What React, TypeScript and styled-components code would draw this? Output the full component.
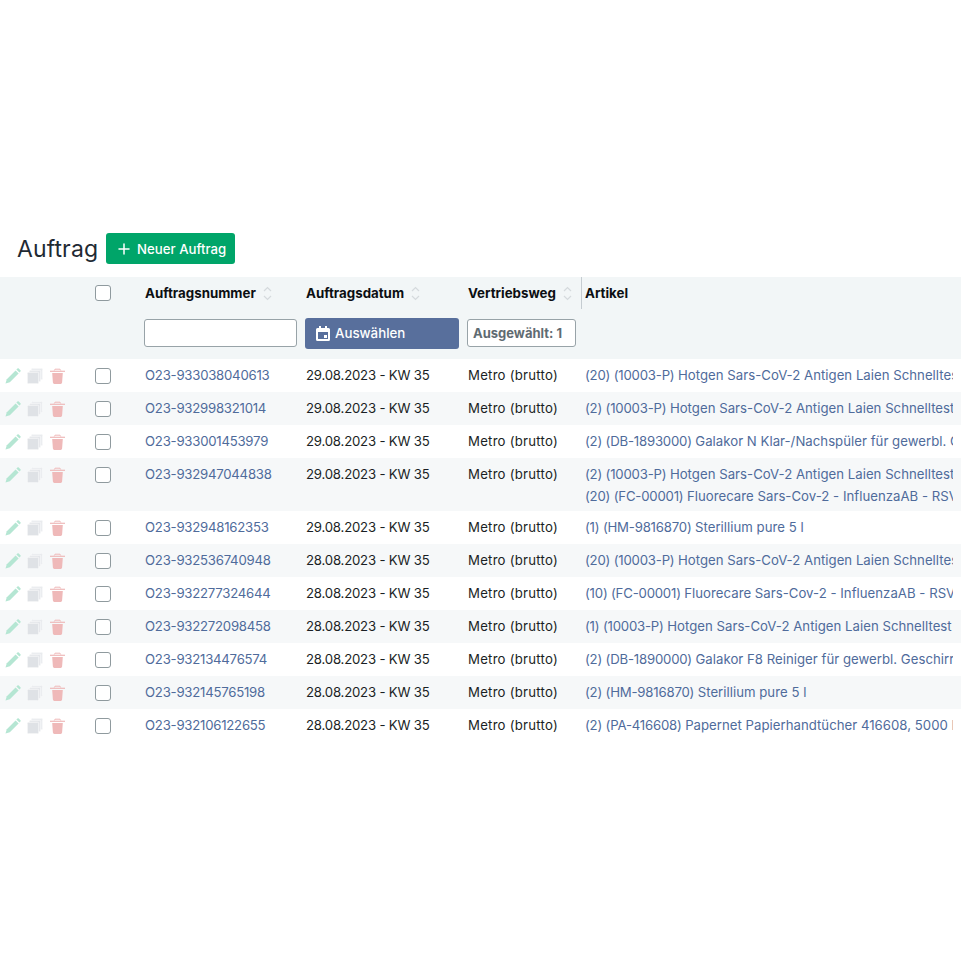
import React from "react";
import styled, { createGlobalStyle } from "styled-components";

const GlobalStyle = createGlobalStyle`
  html, body {
    margin: 0;
    padding: 0;
    background: #ffffff;
    font-family: "Inter", "Liberation Sans", sans-serif;
    overflow: hidden;
  }
`;

const Page = styled.div`
  width: 961px;
  height: 961px;
  padding-top: 233px;
  box-sizing: border-box;
  overflow: hidden;
`;

const TitleRow = styled.div`
  display: flex;
  align-items: center;
  gap: 8px;
  height: 31px;
  padding-left: 17px;
  margin-bottom: 13px;
`;

const Title = styled.h1`
  margin: 0;
  font-size: 23px;
  font-weight: 400;
  letter-spacing: 0.1px;
  color: #1f2a33;
`;

const NewButton = styled.button`
  display: flex;
  align-items: center;
  gap: 7px;
  width: 129px;
  height: 31px;
  padding: 0 0 0 12px;
  border: none;
  border-radius: 3px;
  background: #00a569;
  color: #ffffff;
  font: 500 13.2px "Inter", sans-serif;
`;

const Table = styled.table`
  width: 961px;
  table-layout: fixed;
  border-collapse: collapse;
`;

const HeadRow = styled.tr`
  height: 32px;
  background: #f2f6f7;
`;

const HeadCell = styled.th<{ $divider?: boolean }>`
  padding: 0 0 0 4px;
  text-align: left;
  vertical-align: middle;
  font-size: 13.3px;
  font-weight: 700;
  color: #0c0f12;
  white-space: nowrap;
  box-shadow: ${(p) => (p.$divider ? "inset 1px 0 0 #c5ccd1" : "none")};
`;

const FilterRow = styled.tr`
  height: 50px;
  background: #f2f6f7;
`;

const FilterCell = styled.td`
  padding: 0 0 2px 3px;
  vertical-align: middle;
`;

const HeadInner = styled.span`
  display: inline-flex;
  align-items: center;
  gap: 7px;
`;

const TextFilter = styled.input`
  display: block;
  width: 153px;
  height: 28px;
  box-sizing: border-box;
  border: 1px solid #98a3a8;
  border-radius: 3px;
  background: #ffffff;
  outline: none;
`;

const DateButton = styled.button`
  display: flex;
  align-items: center;
  gap: 5px;
  width: 154px;
  height: 31px;
  padding: 0 0 0 11px;
  border: none;
  border-radius: 3px;
  background: #586f9c;
  color: #ffffff;
  font: 500 13.3px "Inter", sans-serif;
`;

const SelectButton = styled.button`
  display: block;
  width: 109px;
  height: 28px;
  padding: 0 0 0 5px;
  text-align: left;
  border: 1px solid #98a3a8;
  border-radius: 3px;
  background: #ffffff;
  color: #5f6b72;
  font: 700 13px "Inter", sans-serif;
`;

const Row = styled.tr<{ $striped: boolean }>`
  height: 33px;
  background: ${(p) => (p.$striped ? "#f6f8f9" : "#ffffff")};
`;

const Cell = styled.td`
  padding: 5px 0 4px 4px;
  font-size: 13.2px;
  line-height: 22px;
  color: #1a1f24;
  vertical-align: top;
  white-space: nowrap;
  overflow: hidden;
`;

const ActionCell = styled(Cell)`
  padding: 6px 0 0 5px;
`;

const Actions = styled.div`
  display: flex;
  gap: 6px;
  height: 22px;
  align-items: center;
`;

const CheckCell = styled(Cell)`
  padding: 9px 0 0 8px;
`;

const HeadCheckCell = styled(HeadCell)`
  padding-left: 8px;
`;

const Check = styled.span`
  display: block;
  width: 14px;
  height: 14px;
  border: 1px solid #8f9a9e;
  border-radius: 3px;
  background: #ffffff;
`;

const IdCell = styled(Cell)`
  letter-spacing: -0.24px;
`;

const DateCell = styled(Cell)`
  letter-spacing: -0.2px;
`;

const ChannelCell = styled(Cell)`
  letter-spacing: 0.24px;
`;

const ArticleClip = styled.div`
  width: 368px;
  overflow: hidden;
  color: #4f6b9b;
  letter-spacing: 0.02px;
`;

const ArticleCode = styled.span`
  letter-spacing: -0.2px;
`;

const OrderLink = styled.a`
  color: #4f6b9b;
  text-decoration: none;
`;

const SortIcon = () => (
  <svg width="9" height="15" viewBox="0 0 9 15" fill="none" stroke="#d5dadd" strokeWidth="1.2">
    <path d="M1 5l3.5-3.5L8 5" />
    <path d="M1 10l3.5 3.5L8 10" />
  </svg>
);

const PlusIcon = () => (
  <svg width="12" height="12" viewBox="0 0 12 12" stroke="#fff" strokeWidth="1.5" strokeLinecap="round">
    <path d="M6 1v10M1 6h10" />
  </svg>
);

const CalendarIcon = () => (
  <svg width="14" height="15" viewBox="0 0 14 15" fill="#fff">
    <path
      fillRule="evenodd"
      d="M3 0h2v2h4V0h2v2h1.5A1.5 1.5 0 0 1 14 3.5v10a1.5 1.5 0 0 1-1.5 1.5h-11A1.5 1.5 0 0 1 0 13.5v-10A1.5 1.5 0 0 1 1.5 2H3zM2 6v7h10V6zM8 9h3v3H8z"
    />
  </svg>
);

const PenIcon = () => (
  <svg width="16" height="16" viewBox="0 0 16 16" fill="#b5e6d3">
    <path d="M10.6 2.4l3 3-8.8 8.8L.5 15.5l1.3-4.3z" />
    <path d="M11.4 1.6l1-1a1 1 0 0 1 1.4 0l1.6 1.6a1 1 0 0 1 0 1.4l-1 1z" />
  </svg>
);

const CopyIcon = () => (
  <svg width="16" height="16" viewBox="0 0 16 16">
    <rect x="4.3" y="0.3" width="11.4" height="11.4" rx="1" fill="#e9ebee" stroke="#fff" strokeWidth="0.6" />
    <rect x="2.3" y="2.3" width="11.4" height="11.4" rx="1" fill="#e4e6ea" stroke="#fff" strokeWidth="0.6" />
    <rect x="0.3" y="4.3" width="11.4" height="11.4" rx="1" fill="#dfe2e6" stroke="#fff" strokeWidth="0.6" />
  </svg>
);

const TrashIcon = () => (
  <svg width="16" height="16" viewBox="-1 0 16 16" fill="#efb9b9">
    <path d="M4.3 2.5L5 1.2h5l.7 1.3" fill="none" stroke="#efb9b9" strokeWidth="1" />
    <path d="M0 2.7h15v1.2H0z" />
    <path d="M2.2 5h10.6l-.7 9.5a1.5 1.5 0 0 1-1.5 1.4H4.4a1.5 1.5 0 0 1-1.5-1.4z" />
  </svg>
);

type Article = { code: string; name: string };
type Order = { id: string; date: string; articles: Article[] };

const hotgen = "Hotgen Sars-CoV-2 Antigen Laien Schnelltest";
const sterillium = "Sterillium pure 5 l";

const orders: Order[] = [
  { id: "O23-933038040613", date: "29.08.2023 - KW 35", articles: [{ code: "(20) (10003-P)", name: hotgen }] },
  { id: "O23-932998321014", date: "29.08.2023 - KW 35", articles: [{ code: "(2) (10003-P)", name: hotgen }] },
  {
    id: "O23-933001453979",
    date: "29.08.2023 - KW 35",
    articles: [{ code: "(2) (DB-1893000)", name: "Galakor N Klar-/Nachspüler für gewerbl. Geschirr" }],
  },
  {
    id: "O23-932947044838",
    date: "29.08.2023 - KW 35",
    articles: [
      { code: "(2) (10003-P)", name: hotgen },
      { code: "(20) (FC-00001)", name: "Fluorecare Sars-Cov-2 - InfluenzaAB - RSV" },
    ],
  },
  { id: "O23-932948162353", date: "29.08.2023 - KW 35", articles: [{ code: "(1) (HM-9816870)", name: sterillium }] },
  { id: "O23-932536740948", date: "28.08.2023 - KW 35", articles: [{ code: "(20) (10003-P)", name: hotgen }] },
  {
    id: "O23-932277324644",
    date: "28.08.2023 - KW 35",
    articles: [{ code: "(10) (FC-00001)", name: "Fluorecare Sars-Cov-2 - InfluenzaAB - RSV Antigen" }],
  },
  { id: "O23-932272098458", date: "28.08.2023 - KW 35", articles: [{ code: "(1) (10003-P)", name: hotgen }] },
  {
    id: "O23-932134476574",
    date: "28.08.2023 - KW 35",
    articles: [{ code: "(2) (DB-1890000)", name: "Galakor F8 Reiniger für gewerbl. Geschirrspüler" }],
  },
  { id: "O23-932145765198", date: "28.08.2023 - KW 35", articles: [{ code: "(2) (HM-9816870)", name: sterillium }] },
  {
    id: "O23-932106122655",
    date: "28.08.2023 - KW 35",
    articles: [{ code: "(2) (PA-416608)", name: "Papernet Papierhandtücher 416608, 5000 Blatt" }],
  },
];

export default function App() {
  return (
    <Page>
      <GlobalStyle />
      <TitleRow>
        <Title>Auftrag</Title>
        <NewButton>
          <PlusIcon />
          Neuer Auftrag
        </NewButton>
      </TitleRow>
      <Table>
        <colgroup>
          <col width="87" />
          <col width="54" />
          <col width="161" />
          <col width="162" />
          <col width="117" />
          <col width="380" />
        </colgroup>
        <thead>
          <HeadRow>
            <HeadCell />
            <HeadCheckCell>
              <Check />
            </HeadCheckCell>
            <HeadCell>
              <HeadInner>Auftragsnummer <SortIcon /></HeadInner>
            </HeadCell>
            <HeadCell>
              <HeadInner>Auftragsdatum <SortIcon /></HeadInner>
            </HeadCell>
            <HeadCell>
              <HeadInner>Vertriebsweg <SortIcon /></HeadInner>
            </HeadCell>
            <HeadCell $divider>Artikel</HeadCell>
          </HeadRow>
          <FilterRow>
            <FilterCell />
            <FilterCell />
            <FilterCell>
              <TextFilter />
            </FilterCell>
            <FilterCell>
              <DateButton>
                <CalendarIcon />
                Auswählen
              </DateButton>
            </FilterCell>
            <FilterCell>
              <SelectButton>Ausgewählt: 1</SelectButton>
            </FilterCell>
            <FilterCell />
          </FilterRow>
        </thead>
        <tbody>
          {orders.map((order, i) => (
            <Row key={order.id} $striped={i % 2 === 1}>
              <ActionCell>
                <Actions>
                  <PenIcon />
                  <CopyIcon />
                  <TrashIcon />
                </Actions>
              </ActionCell>
              <CheckCell>
                <Check />
              </CheckCell>
              <IdCell>
                <OrderLink href="#">{order.id}</OrderLink>
              </IdCell>
              <DateCell>{order.date}</DateCell>
              <ChannelCell>Metro (brutto)</ChannelCell>
              <Cell>
                <ArticleClip>
                  {order.articles.map((a) => (
                    <div key={a.code}>
                      <ArticleCode>{a.code} </ArticleCode>
                      {a.name}
                    </div>
                  ))}
                </ArticleClip>
              </Cell>
            </Row>
          ))}
        </tbody>
      </Table>
    </Page>
  );
}
